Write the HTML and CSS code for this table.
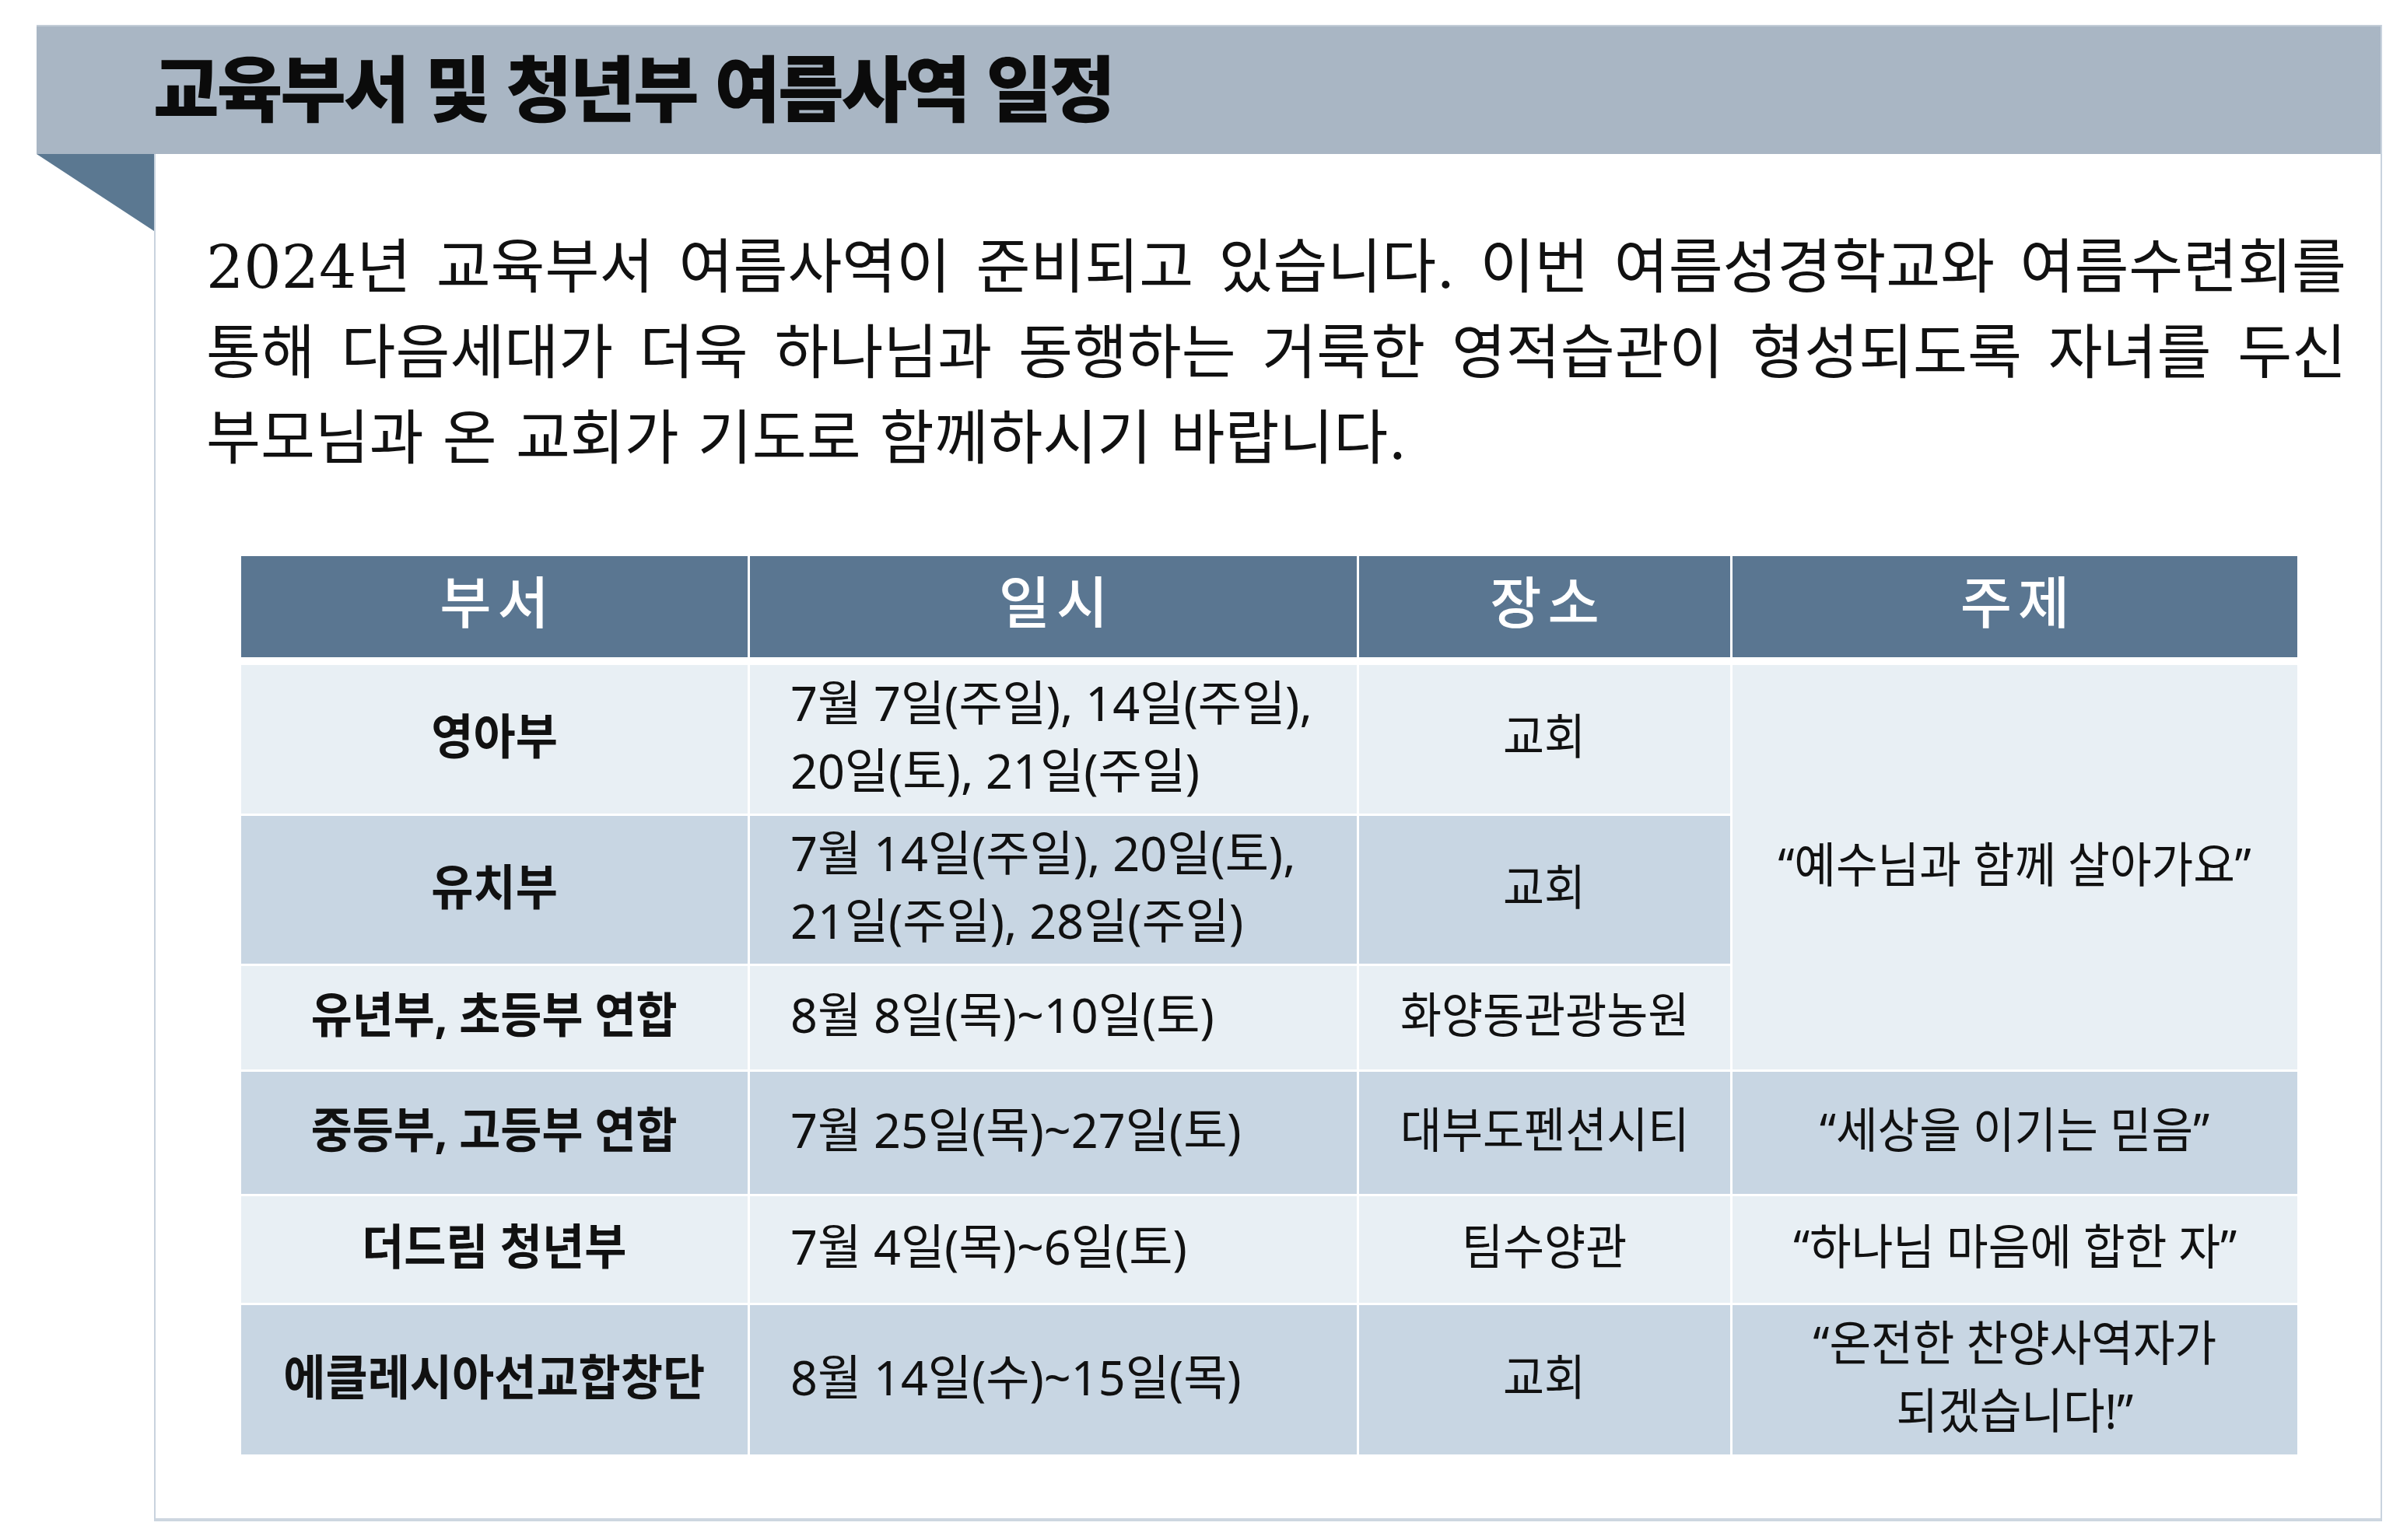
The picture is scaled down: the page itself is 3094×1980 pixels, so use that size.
FILE: index.html
```html
<!DOCTYPE html>
<html lang="ko">
<head>
<meta charset="utf-8">
<title>교육부서 및 청년부 여름사역 일정</title>
<link rel="stylesheet" href="styles.css">
</head>
<body>
<div class="sheet">
  <div class="title-bar">
    <h1 class="title">교육부서 및 청년부 여름사역 일정</h1>
  </div>
  <div class="body-row">
    <div class="fold"></div>
    <div class="content">
      <p class="intro">2024년 교육부서 여름사역이 준비되고 있습니다. 이번 여름성경학교와 여름수련회를 통해 다음세대가 더욱 하나님과 동행하는 거룩한 영적습관이 형성되도록 자녀를 두신 부모님과 온 교회가 기도로 함께하시기 바랍니다.</p>

      <div class="schedule">
        <div class="th"><span>부서</span></div>
        <div class="th"><span>일시</span></div>
        <div class="th"><span>장소</span></div>
        <div class="th"><span>주제</span></div>

        <div class="td dept light"><span>영아부</span></div>
        <div class="td date light"><span>7월 7일(주일), 14일(주일),<br>20일(토), 21일(주일)</span></div>
        <div class="td place light"><span>교회</span></div>
        <div class="td theme light span3"><span>“예수님과 함께 살아가요”</span></div>

        <div class="td dept dark"><span>유치부</span></div>
        <div class="td date dark"><span>7월 14일(주일), 20일(토),<br>21일(주일), 28일(주일)</span></div>
        <div class="td place dark"><span>교회</span></div>

        <div class="td dept light"><span class="tight">유년부, 초등부 연합</span></div>
        <div class="td date light"><span>8월 8일(목)~10일(토)</span></div>
        <div class="td place light"><span>화양동관광농원</span></div>

        <div class="td dept dark"><span class="tight">중등부, 고등부 연합</span></div>
        <div class="td date dark"><span>7월 25일(목)~27일(토)</span></div>
        <div class="td place dark"><span>대부도펜션시티</span></div>
        <div class="td theme dark"><span>“세상을 이기는 믿음”</span></div>

        <div class="td dept light"><span>더드림 청년부</span></div>
        <div class="td date light"><span>7월 4일(목)~6일(토)</span></div>
        <div class="td place light"><span>팀수양관</span></div>
        <div class="td theme light"><span>“하나님 마음에 합한 자”</span></div>

        <div class="td dept dark"><span>에클레시아선교합창단</span></div>
        <div class="td date dark"><span>8월 14일(수)~15일(목)</span></div>
        <div class="td place dark"><span>교회</span></div>
        <div class="td theme dark"><span>“온전한 찬양사역자가<br>되겠습니다!”</span></div>
      </div>
    </div>
  </div>
</div>
</body>
</html>
```

FILE: styles.css
```css
html, body {
  margin: 0;
  padding: 0;
  background: #ffffff;
}

body {
  font-family: "Noto Sans CJK KR", "Noto Sans", sans-serif;
  color: #111111;
}

.sheet {
  width: 3013px;
  margin: 32px 0 0 47px;
  border-right: 2px solid #c9d3de;
}

.title-bar {
  height: 164px;
  border-top: 2px solid #c2ccd7;
  background: #a9b6c4;
  display: flex;
  align-items: center;
  padding-left: 150px;
}

.title {
  margin: 0;
  font-family: "Noto Sans CJK KR", sans-serif;
  font-weight: 900;
  font-size: 92px;
  letter-spacing: -3px;
  line-height: 1;
  color: #0b0b0b;
  padding-bottom: 14px;
}

.body-row {
  display: flex;
  align-items: flex-start;
}

.fold {
  flex: 0 0 151px;
  height: 99px;
  background: #5b7891;
  clip-path: polygon(0 0, 100% 0, 100% 100%);
}

.content {
  flex: 1;
  border-left: 2px solid #c9d3de;
  border-bottom: 4px solid #cdd6e0;
  padding: 91px 44px 82px 65px;
}

.intro {
  margin: 0;
  font-family: "DejaVu Serif", "Noto Sans CJK KR", serif;
  font-weight: 400;
  font-size: 76px;
  line-height: 110px;
  text-align: justify;
  word-break: keep-all;
  color: #111111;
}

.schedule {
  margin: 96px 62px 0 45px;
  display: grid;
  grid-template-columns: 651px 780px 477px 726px;
  grid-template-rows: 137px 191px 190px 133px 157px 137px 192px;
  gap: 3px;
  background: #ffffff;
  font-family: "Noto Sans", "Noto Sans CJK KR", sans-serif;
}

.th {
  margin-bottom: 7px;
  background: #5a7691;
  color: #ffffff;
  display: flex;
  align-items: center;
  justify-content: center;
  font-family: "Noto Sans CJK KR", sans-serif;
  font-weight: 500;
  font-size: 72px;
  letter-spacing: 8px;
  line-height: 1;
}

.th span {
  margin-right: -8px;
  padding-bottom: 20px;
}

.td {
  display: flex;
  align-items: center;
  justify-content: center;
  text-align: center;
  font-size: 62px;
  line-height: 87px;
  color: #111111;
  padding-bottom: 8px;
}

.td span {
  display: inline-block;
  white-space: nowrap;
}

.light { background: #e8eff4; }
.dark { background: #c8d6e3; }

.span3 { grid-row: span 3; }

.dept {
  font-weight: 700;
}
.dept span { transform: scaleX(0.95); }
.dept span.tight { transform: scaleX(0.93); }

.date {
  justify-content: flex-start;
  text-align: left;
  padding-left: 52px;
}
.date span {
  transform: scaleX(0.985);
  transform-origin: left center;
}

.place span { transform: scaleX(0.93); }

.theme span { transform: scaleX(0.94); }
```
